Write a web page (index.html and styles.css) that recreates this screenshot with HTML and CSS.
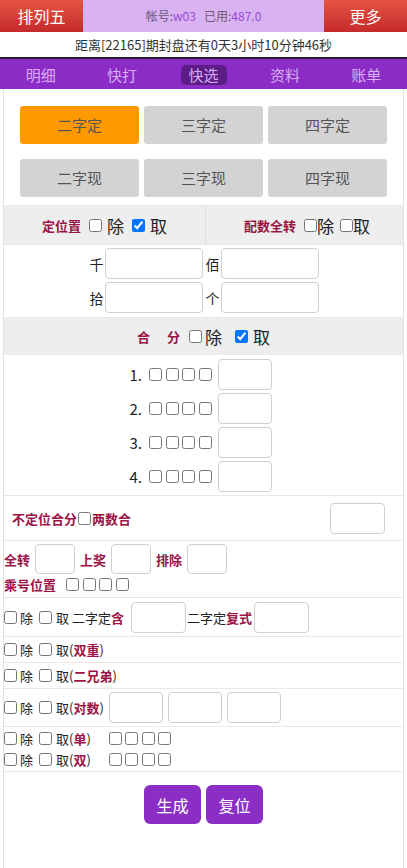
FILE: index.html
```html
<!DOCTYPE html>
<html lang="zh">
<head>
<meta charset="utf-8">
<link rel="stylesheet" href="styles.css">
</head>
<body>
<div class="top">
  <div class="tbtn">排列五</div>
  <div class="acct">帐号:<span class="pv">w03</span>&nbsp;&nbsp;&nbsp;已用:<span class="pv">487.0</span></div>
  <div class="tbtn">更多</div>
</div>
<div class="count">距离[22165]期封盘还有0天3小时10分钟46秒</div>
<nav class="nav">
  <span class="ni">明细</span>
  <span class="ni">快打</span>
  <span class="ni"><span class="act">快选</span></span>
  <span class="ni">资料</span>
  <span class="ni">账单</span>
</nav>
<main class="wrap">
  <div class="types">
    <div class="tb on">二字定</div>
    <div class="tb">三字定</div>
    <div class="tb">四字定</div>
    <div class="tb">二字现</div>
    <div class="tb">三字现</div>
    <div class="tb">四字现</div>
  </div>

  <div class="gray split">
    <div class="half"><b class="lb">定位置</b><input type="checkbox" class="cb"><span class="big">除</span><input type="checkbox" class="cb" checked><span class="big">取</span></div>
    <div class="half r"><b class="lb">配数全转</b><input type="checkbox" class="cb tight"><span class="big">除</span><input type="checkbox" class="cb tight"><span class="big">取</span></div>
  </div>

  <div class="pos">
    <div class="prow"><span class="pl">千</span><input class="in w98"><span class="pl">佰</span><input class="in w98"></div>
    <div class="prow"><span class="pl">拾</span><input class="in w98"><span class="pl">个</span><input class="in w98"></div>
  </div>

  <div class="gray hefen"><b class="lb hf">合 分</b><input type="checkbox" class="cb"><span class="big">除</span><input type="checkbox" class="cb second" checked><span class="big">取</span></div>

  <div class="sums">
    <div class="srow"><span class="num">1.</span><span class="cbs"><input type="checkbox" class="cb"><input type="checkbox" class="cb"><input type="checkbox" class="cb"><input type="checkbox" class="cb"></span><input class="in w54"></div>
    <div class="srow"><span class="num">2.</span><span class="cbs"><input type="checkbox" class="cb"><input type="checkbox" class="cb"><input type="checkbox" class="cb"><input type="checkbox" class="cb"></span><input class="in w54"></div>
    <div class="srow"><span class="num">3.</span><span class="cbs"><input type="checkbox" class="cb"><input type="checkbox" class="cb"><input type="checkbox" class="cb"><input type="checkbox" class="cb"></span><input class="in w54"></div>
    <div class="srow"><span class="num">4.</span><span class="cbs"><input type="checkbox" class="cb"><input type="checkbox" class="cb"><input type="checkbox" class="cb"><input type="checkbox" class="cb"></span><input class="in w54"></div>
  </div>

  <div class="row bdw">
    <span class="bdl"><b class="lb">不定位合分</b><input type="checkbox" class="cb"><b class="lb">两数合</b></span>
    <input class="in w55">
  </div>

  <div class="row qz">
    <div class="qzl"><b class="lb">全转</b><input class="in w40"><b class="lb">上奖</b><input class="in w40"><b class="lb">排除</b><input class="in w40"></div>
    <div class="cheng"><b class="lb">乘号位置</b><span class="cbs"><input type="checkbox" class="cb"><input type="checkbox" class="cb"><input type="checkbox" class="cb"><input type="checkbox" class="cb"></span></div>
  </div>

  <div class="row ezd">
    <input type="checkbox" class="cb c1"><span class="t">除</span><input type="checkbox" class="cb c2"><span class="t">取 二字定<em class="hl">含</em></span><input class="in w55 i1"><span class="t">二字定<em class="hl">复式</em></span><input class="in w55 i2">
  </div>

  <div class="row sm"><input type="checkbox" class="cb c1"><span class="t">除</span><input type="checkbox" class="cb c2"><span class="t">取(<em class="hl">双重</em>)</span></div>
  <div class="row sm"><input type="checkbox" class="cb c1"><span class="t">除</span><input type="checkbox" class="cb c2"><span class="t">取(<em class="hl">二兄弟</em>)</span></div>
  <div class="row ds"><input type="checkbox" class="cb c1"><span class="t">除</span><input type="checkbox" class="cb c2"><span class="t">取(<em class="hl">对数</em>)</span><input class="in w54"><input class="in w54"><input class="in w54"></div>

  <div class="row dual">
    <div class="dl"><input type="checkbox" class="cb c1"><span class="t">除</span><input type="checkbox" class="cb c2"><span class="t">取(<em class="hl">单</em>)</span><span class="cbs gap"><input type="checkbox" class="cb"><input type="checkbox" class="cb"><input type="checkbox" class="cb"><input type="checkbox" class="cb"></span></div>
    <div class="dl"><input type="checkbox" class="cb c1"><span class="t">除</span><input type="checkbox" class="cb c2"><span class="t">取(<em class="hl">双</em>)</span><span class="cbs gap"><input type="checkbox" class="cb"><input type="checkbox" class="cb"><input type="checkbox" class="cb"><input type="checkbox" class="cb"></span></div>
  </div>

  <div class="acts">
    <button class="pb">生成</button>
    <button class="pb">复位</button>
  </div>
</main>
</body>
</html>
```

FILE: styles.css
```css
* { box-sizing: border-box; }
html, body { margin: 0; padding: 0; background: #fff; }
body { font-family: "Noto Sans CJK SC", "Microsoft YaHei", sans-serif; color: #333; width: 407px; }

.top { display: flex; height: 32px; background: #d9b2f2; }
.tbtn { width: 83px; background: linear-gradient(#e55542, #c52a2b); color: #fff; font-size: 16px; line-height: 32px; text-align: center; }
.acct { flex: 1; text-align: center; line-height: 32px; font-size: 12px; color: #6b5a78; }
.pv { color: #9a4ad6; }

.count { height: 27px; line-height: 26px; text-align: center; font-size: 13px; color: #333; border-bottom: 2px solid #2a1a30; }
.nav { display: flex; height: 30px; background: #8b2cc6; align-items: center; }
.ni { flex: 1; text-align: center; color: #d8aef5; font-size: 15px; }
.act { display: inline-block; background: #5c1e86; border-radius: 5px; padding: 0 8px; line-height: 20px; }

.wrap { margin: 0 3px; border-left: 1px solid #e6e1dc; border-right: 1px solid #e6e1dc; background: #fff; min-height: 779px; }

.types { display: grid; grid-template-columns: repeat(3, 119px); column-gap: 5px; row-gap: 15px; padding: 17px 0 8px 16px; }
.tb { height: 38px; line-height: 38px; text-align: center; background: #d3d3d3; border-radius: 3px; font-size: 15px; color: #555; }
.tb.on { background: #ff9900; }

.gray { background: #eeeeee; }
.split { display: flex; height: 40px; border-top: 1px solid #f3e6dc; border-bottom: 1px solid #f3e6dc; }
.half { flex: 0 0 201px; display: flex; align-items: center; justify-content: center; box-shadow: 1px 0 0 #e2dcd8; }
.half.r { flex: 1; box-shadow: none; padding-left: 6px; }
.lb { color: #9b1447; font-size: 13px; font-weight: bold; }
.big { font-size: 17px; color: #222; }
.cb { margin: 0 5px 0 8px; width: 13px; height: 13px; vertical-align: middle; }
.half .cb.tight { margin: 0 0 0 8px; }
.half.r .cb.tight + .big + .cb.tight { margin-left: 6px; }

.pos { padding: 3px 0 4px; display: flex; flex-direction: column; align-items: center; gap: 3px; border-bottom: 1px solid #f3e6dc; }
.prow { display: flex; align-items: center; }
.pl { font-size: 14px; color: #222; width: 15px; text-align: right; margin-right: 1px; }
.prow .in + .pl { margin-left: 2px; }
.in { border: 1px solid #cfcfcf; border-radius: 4px; height: 31px; background: #fff; padding: 0; font: inherit; }
.w98 { width: 98px; }
.w54 { width: 54px; }
.w55 { width: 55px; }
.w40 { width: 40px; height: 30px; }

.hefen { height: 37px; display: flex; align-items: center; justify-content: center; border-bottom: 1px solid #f3e6dc; }
.hf { word-spacing: 14px; }
.hefen .cb { margin: 0 3px 0 9px; }
.hefen .cb.second { margin: 0 5px 0 13px; }

.sums { display: flex; flex-direction: column; align-items: center; padding: 4px 0 3px; gap: 3px; border-bottom: 1px solid #f3e6dc; }
.srow { display: flex; align-items: center; padding-right: 6px; }
.num { font-size: 15px; color: #222; margin-right: 7px; }
.cbs { display: inline-flex; gap: 3.5px; margin-right: 6px; }
.cbs .cb, .row .cbs .cb { margin: 0; width: 13px; height: 13px; }

.row { display: flex; align-items: center; border-bottom: 1px solid #f3e6dc; }
.bdw { height: 45px; justify-content: space-between; padding: 0 18px 0 8px; }
.bdl { display: flex; align-items: center; }
.bdl .cb { margin: 0 1px; }

.qz { flex-direction: column; align-items: flex-start; height: 57px; padding-top: 3px; }
.qzl { display: flex; align-items: center; }
.qzl .in { margin: 0 5px; }
.cheng { display: flex; align-items: center; margin-top: 1px; }
.cheng .cbs { margin-left: 10px; }

.t { font-size: 13px; color: #222; }
.hl { font-style: normal; color: #9b1447; font-weight: bold; }
.row .cb.c1 { margin: 0 3px 0 0; }
.row .cb.c2 { margin: 0 4px 0 6px; }
.ezd { height: 39px; }
.ezd .in.i1 { margin: 0 1px 0 7px; }
.ezd .in.i2 { margin: 0 0 0 2px; }
.sm { height: 26px; }
.ds { height: 38px; }
.ds .in { margin-left: 5px; }
.dual { flex-direction: column; align-items: flex-start; height: 45px; justify-content: center; gap: 2px; }
.dl { display: flex; align-items: center; }
.cbs.gap { margin-left: 18px; }

.acts { display: flex; justify-content: center; gap: 5px; padding: 13px 0 0 0; }
.pb { width: 57px; height: 39px; border: 0; border-radius: 6px; background: #8b2ec6; color: #fff; font: inherit; font-size: 16px; }
```
